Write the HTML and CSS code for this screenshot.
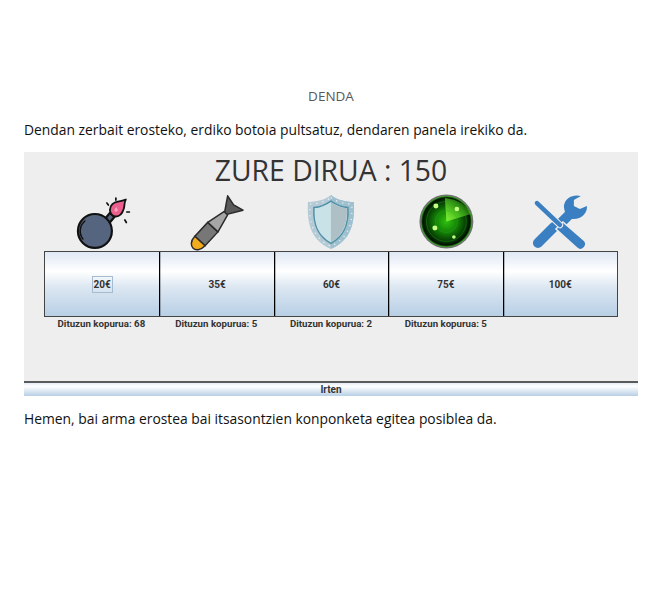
FILE: index.html
```html
<!DOCTYPE html>
<html lang="eu">
<head>
<meta charset="utf-8">
<title>Denda</title>
<link rel="stylesheet" href="styles.css">
</head>
<body>
<main class="page">
  <h1 class="heading">DENDA</h1>
  <p class="para para-top">Dendan zerbait erosteko, erdiko botoia pultsatuz, dendaren panela irekiko da.</p>
  <section class="shop">
    <div class="money">ZURE DIRUA : 150</div>
    <div class="grid icons">
      <svg class="icon" viewBox="0 0 115 56">
        <g stroke="#111" stroke-width="2.200" stroke-linecap="round" stroke-linejoin="round">
          <path d="M61 24l5-6 4.500 4-5 6z" fill="#56657f"/>
          <circle cx="51" cy="36" r="17" fill="#56657f"/>
          <path d="M39 44a13 13 0 0 1 2-18" fill="none" stroke-width="1.500"/>
          <path d="M66 15c0-5 4-8 8-8.500 3-.4 5-1 8-2-2 3-1 6-2 9-1.500 5-4 8-8 8-3 0-6-3-6-6.500z" fill="#ec5f8c" stroke-width="1.800"/>
          <path d="M71 17c-1-2 0-4 2-5 0 2 1 2 1 4z" fill="#f8a3bd" stroke="none"/>
          <path d="M63 8l1.500 2M72 3v2M83 17h2.500M81 25l1.500 2.500" fill="none" stroke-width="1.700"/>
        </g>
      </svg>
      <svg class="icon" viewBox="0 0 115 56">
        <g transform="translate(41 46) rotate(-47)" stroke="#2b2b2b" stroke-width="1.500" stroke-linejoin="round">
          <path d="M37 -1L52 -10.500 49.500 0 52 10.500 37 1z" fill="#5a5a5a"/>
          <path d="M0 -7L19 -7 19 7 0 7z" fill="#777"/>
          <path d="M19 -7L38 -2.500 38 2.500 19 7z" fill="#a6a6a6"/>
          <path d="M0 -7C-7 -7 -10 -3 -10 0 -10 3 -7 7 0 7z" fill="#f2ac1c"/>
        </g>
      </svg>
      <svg class="icon" viewBox="0 0 115 56">
        <path d="M57 0c6 5 15 7 23 7 1 20-2 38-23 47C36 45 33 27 34 7c8 0 17-2 23-7z" fill="#b4cad5"/>
        <path d="M57 0c6 5 15 7 23 7 1 20-2 38-23 47z" fill="#9fc0cf"/>
        <path d="M57 2.500c5.500 4 13 6.500 21 6.500 .8 18-2 33-21 42.500C38 42 35.200 27 36 9c8 0 15.500-2.500 21-6.500z" fill="none" stroke="#eef5f7" stroke-width="1.200" stroke-dasharray="1.200 5"/>
        <path d="M57 6c5 3.500 11 6 17 6.500 1 16-3 28-17 36C43 40.500 39 28.500 40 12.500 46 12 52 9.500 57 6z" fill="#c9e2e7" stroke="#4f90a6" stroke-width="1.500"/>
        <path d="M57 7v40.500c13-8 16.500-19 16-34.200-6-.5-11.500-2.800-16-6.300z" fill="#aebfc6"/>
      </svg>
      <svg class="icon" viewBox="0 0 115 56">
        <defs>
          <radialGradient id="radarBg">
            <stop offset="0" stop-color="#2fc010"/>
            <stop offset=".45" stop-color="#138006"/>
            <stop offset=".78" stop-color="#053a03"/>
            <stop offset=".93" stop-color="#010f01"/>
            <stop offset="1" stop-color="#35b51c"/>
          </radialGradient>
          <linearGradient id="sweep" x1="0" y1="1" x2="1" y2="0">
            <stop offset="0" stop-color="#8cf53a"/>
            <stop offset="1" stop-color="#18a00a" stop-opacity=".35"/>
          </linearGradient>
        </defs>
        <circle cx="58.500" cy="26.500" r="27" fill="#6d756d"/>
        <circle cx="58.500" cy="26.500" r="25.500" fill="url(#radarBg)"/>
        <path d="M58.500 26.500L57 3C70 4 80 11 83 19z" fill="url(#sweep)"/>
        <g fill="none" stroke="#37a828" stroke-opacity=".5" stroke-width=".7">
          <circle cx="58.500" cy="26.500" r="11"/>
          <circle cx="58.500" cy="26.500" r="20"/>
        </g>
        <g fill="#c4ff86">
          <circle cx="48" cy="11" r="2.500"/>
          <circle cx="69" cy="14" r="2.300"/>
          <circle cx="47" cy="33" r="2.500"/>
          <circle cx="66" cy="42" r="1.800"/>
        </g>
      </svg>
      <svg class="icon" viewBox="0 0 115 56">
        <g fill="#3a7fc1">
          <path d="M35 48L51 32" stroke="#3a7fc1" stroke-width="10" stroke-linecap="round"/>
          <path d="M78 1C70 -1 62 3 61 11c0 3 1 5 1 6l-7 7 7 7 7-7c9 1 16-6 15-13l-7 3-6-3v-6z"/>
        </g>
        <g stroke="#eeeeee" stroke-width="1.500" fill="#3a7fc1">
          <path d="M53 34l7-7 22 19c2 3 1 5-1 7s-5 2-7 0z"/>
        </g>
        <path d="M34 8l23 22" stroke="#eeeeee" stroke-width="6.500" stroke-linecap="round" fill="none"/>
        <path d="M34 8l23 22" stroke="#3a7fc1" stroke-width="4.500" stroke-linecap="round" fill="none"/>
      </svg>
    </div>
    <div class="grid buttons">
      <button class="buy" type="button"><span class="focus">20€</span></button>
      <button class="buy" type="button"><span>35€</span></button>
      <button class="buy" type="button"><span>60€</span></button>
      <button class="buy" type="button"><span>75€</span></button>
      <button class="buy" type="button"><span>100€</span></button>
    </div>
    <div class="grid counts">
      <span>Dituzun kopurua: 68</span>
      <span>Dituzun kopurua: 5</span>
      <span>Dituzun kopurua: 2</span>
      <span>Dituzun kopurua: 5</span>
      <span></span>
    </div>
    <button class="exit" type="button">Irten</button>
  </section>
  <p class="para para-bottom">Hemen, bai arma erostea bai itsasontzien konponketa egitea posiblea da.</p>
</main>
</body>
</html>
```

FILE: styles.css
```css
html, body {
  margin: 0;
  background: #fff;
}
.page {
  padding: 87px 34px 0 24px;
  font-family: "Open Sans", "Noto Sans", sans-serif;
}
.heading {
  margin: 0;
  font-size: 13.500px;
  line-height: 18px;
  font-weight: 400;
  color: #595959;
  text-align: center;
}
.para {
  margin: 0;
  font-size: 13.850px;
  line-height: 20px;
  color: #111;
}
.para-top {
  margin-top: 15px;
}
.para-bottom {
  margin-top: 13px;
}
.shop {
  margin-top: 12px;
  height: 244px;
  box-sizing: border-box;
  background: #eeeeee;
  display: flex;
  flex-direction: column;
}
.money {
  height: 43px;
  font-family: "Open Sans", "Noto Sans", sans-serif;
  font-size: 28.300px;
  line-height: 36px;
  color: #333;
  text-align: center;
}
.grid {
  display: grid;
  grid-template-columns: repeat(5, 1fr);
  margin: 0 20px;
}
.icons {
  height: 56px;
}
.icon {
  display: block;
  width: 100%;
  height: 56px;
  overflow: visible;
}
.buttons {
  height: 66px;
  border: 1px solid #444;
  box-sizing: border-box;
}
.buy {
  margin: 0;
  padding: 0;
  border: 0;
  border-left: 1px solid #000;
  box-shadow: inset 1px 0 0 rgba(0, 0, 0, 0.25);
  background: linear-gradient(#dfe8f4 0%, #ffffff 30%, #dce7f2 55%, #b8cfe5 100%);
  font-family: "Roboto", "Liberation Sans", sans-serif;
  font-size: 10px;
  font-weight: 700;
  color: #333;
  display: flex;
  align-items: center;
  justify-content: center;
}
.buy:first-child {
  border-left: 0;
  box-shadow: none;
}
.focus {
  padding: 2px 1px;
  outline: 1px solid #a6bbd0;
}
.counts {
  height: 64px;
  padding-top: 1px;
  box-sizing: border-box;
  font-family: "Roboto", "Liberation Sans", sans-serif;
  font-size: 9.700px;
  font-weight: 700;
  line-height: 12px;
  color: #333;
  text-align: center;
}
.exit {
  display: block;
  width: 100%;
  height: 15px;
  margin: 0;
  padding: 0;
  border: 0;
  border-top: 2px solid #5a5a5a;
  background: linear-gradient(#e3ecf6, #ffffff 25%, #b8cfe5);
  font-family: "Roboto", "Liberation Sans", sans-serif;
  font-size: 10px;
  font-weight: 700;
  line-height: 13px;
  color: #333;
  text-align: center;
}
```
